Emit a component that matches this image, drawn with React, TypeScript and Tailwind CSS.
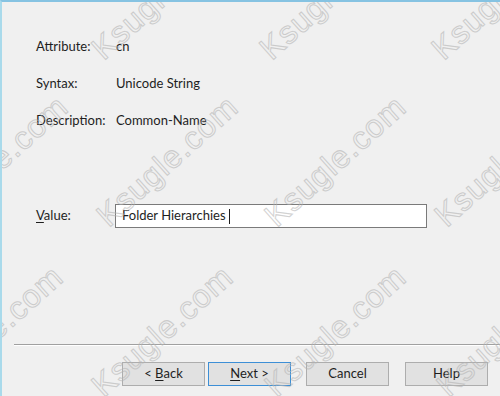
import React from "react";

const marks = [
  { x: -62, y: 63 }, { x: 105, y: 63 }, { x: 273, y: 63 }, { x: 445, y: 63 },
  { x: -60, y: 230 }, { x: 110, y: 230 }, { x: 278, y: 230 }, { x: 448, y: 230 },
  { x: -65, y: 400 }, { x: 105, y: 400 }, { x: 278, y: 400 }, { x: 450, y: 400 },
];

function Btn({ children, def }: { children: React.ReactNode; def?: boolean }) {
  return (
    <div
      className={
        "w-[83px] h-[24px] flex items-center justify-center bg-[#e1e1e1] border " +
        (def ? "border-[#3d8fd6]" : "border-[#adadad]")
      }
    >
      {children}
    </div>
  );
}

export default function App() {
  return (
    <div className="relative w-[500px] h-[396px] overflow-hidden bg-[#f0f0f0] border-t-2 border-l-2 border-t-[#86c3e2] border-l-[#a9daeb] font-['Lato',sans-serif] text-[13px] text-[#1e1e1e]">
      <div className="flex flex-col h-full">
        <div className="pl-[34px] pt-[36px] flex flex-col gap-[19px]">
          <div className="flex h-[18px] items-center">
            <span className="w-[80px]">Attribute:</span>
            <span>cn</span>
          </div>
          <div className="flex h-[18px] items-center">
            <span className="w-[80px]">Syntax:</span>
            <span>Unicode String</span>
          </div>
          <div className="flex h-[18px] items-center">
            <span className="w-[80px]">Description:</span>
            <span>Common-Name</span>
          </div>
        </div>

        <div className="pl-[34px] mt-[74px] flex items-center h-[24px]">
          <span className="w-[79px]">
            <span className="underline underline-offset-2">V</span>alue:
          </span>
          <div className="w-[312px] h-[24px] bg-white border border-[#7a7a7a] flex items-center pl-[6px]">
            Folder Hierarchies&nbsp;<span className="inline-block w-px h-[15px] bg-[#1e1e1e]" />
          </div>
        </div>

        <div className="ml-[12px] mt-[116px] h-px bg-[#a0a0a0] border-b border-white box-content" />

        <div className="flex mt-[16px] ml-[120px]">
          <Btn>
            &lt;&nbsp;<span className="underline underline-offset-2">B</span>ack
          </Btn>
          <div className="w-[3px]" />
          <Btn def>
            <span className="underline underline-offset-2">N</span>ext &gt;
          </Btn>
          <div className="w-[15px]" />
          <Btn>Cancel</Btn>
          <div className="w-[16px]" />
          <Btn>Help</Btn>
        </div>
      </div>

      {marks.map((m, i) => (
        <span
          key={i}
          className="absolute whitespace-nowrap text-[32px] leading-none font-['Liberation_Sans',sans-serif] tracking-[1px] text-transparent [-webkit-text-stroke:1px_#b4b4b4] opacity-60 pointer-events-none [transform-origin:0_100%] -rotate-[42deg]"
          style={{ left: m.x, top: m.y - 32 }}
        >
          Ksugle.com
        </span>
      ))}
    </div>
  );
}
